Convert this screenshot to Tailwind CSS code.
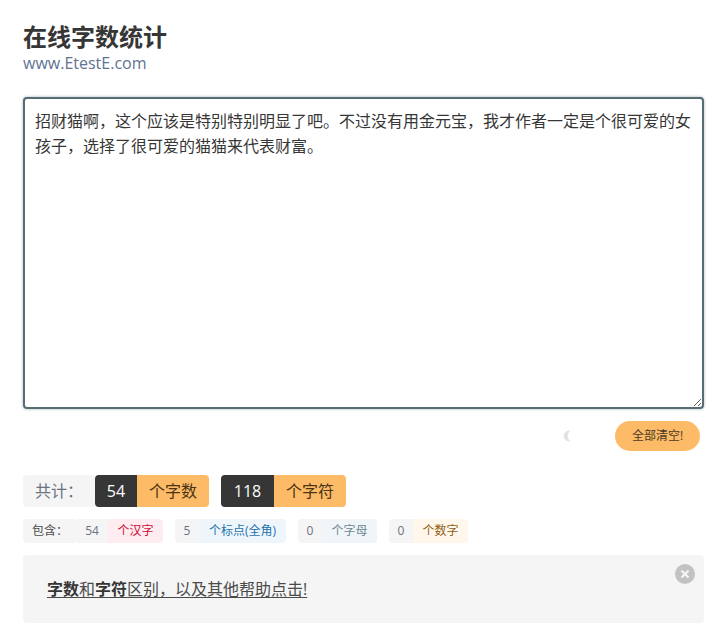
<!DOCTYPE html>
<html lang="zh-CN">
<head>
<meta charset="utf-8">
<title>在线字数统计</title>
<script src="https://cdn.jsdelivr.net/npm/@tailwindcss/browser@4"></script>
</head>
<body class="bg-white text-[#4a4a4a] font-['Open_Sans','Noto_Sans_CJK_SC',sans-serif] overflow-hidden">
<div class="w-[721px] h-[631px] pl-[23px] pr-[17px] pt-[21px]">
    <!-- Title -->
    <h1 class="text-2xl leading-[32px] font-bold text-[#363636]">在线字数统计</h1>
    <p class="text-base leading-[20px] text-[#5f7391]">www.EtestE.com</p>

    <!-- Text input -->
    <textarea class="block mt-[24px] w-full h-[312px] pl-[10px] pr-[8px] pt-[10px] pb-[10px] text-base leading-[25px] text-[#363636] bg-white border-2 border-[#566d73] rounded-[4px] shadow-[0_0_3px_#9fb2b7] outline-none resize-y">招财猫啊，这个应该是特别特别明显了吧。不过没有用金元宝，我才作者一定是个很可爱的女孩子，选择了很可爱的猫猫来代表财富。</textarea>

    <!-- Clear row -->
    <div class="flex items-center justify-end mt-[12px] h-[30px] pr-[4px]">
        <svg class="w-[10px] h-[12px] mr-[43px]" viewBox="0 0 10 12">
            <path d="M8.5 .8A5.4 5.4 0 1 0 8.5 11.2 6.2 6.2 0 0 1 8.5 .8Z" fill="#e0e3e3"/>
        </svg>
        <button class="w-[85px] h-[30px] rounded-full bg-[#fdbb68] text-xs text-[#4a3a22]">全部清空!</button>
    </div>

    <!-- Totals -->
    <div class="flex mt-[24px] h-[32px] text-base leading-[32px]">
        <span class="w-[72px] pl-[12px] bg-[#f5f5f5] rounded-l-[4px] text-[#6b7280]">共计：</span>
        <span class="w-[42px] text-center bg-[#363636] text-white rounded-l-[4px]">54</span>
        <span class="w-[72px] text-center bg-[#fdbb68] text-[#4a3413] rounded-r-[4px]">个字数</span>
        <span class="w-[53px] ml-[12px] text-center bg-[#363636] text-white rounded-l-[4px]">118</span>
        <span class="w-[72px] text-center bg-[#fdbb68] text-[#4a3413] rounded-r-[4px]">个字符</span>
    </div>

    <!-- Breakdown -->
    <div class="flex mt-[12px] h-[24px] text-xs leading-[24px]">
        <span class="w-[52px] pl-[9px] bg-[#f5f5f5] rounded-l-[4px] text-[#4a4a4a]">包含：</span>
        <span class="w-[33px] pl-[1px] text-center bg-[#f5f5f5] text-[#6b7280] rounded-l-[4px]">54</span>
        <span class="w-[55px] text-center bg-[#feecf0] text-[#cc0f35] rounded-r-[4px]">个汉字</span>
        <span class="w-[24px] ml-[12px] text-center bg-[#f5f5f5] text-[#6b7280] rounded-l-[4px]">5</span>
        <span class="w-[87px] text-center bg-[#eef6fc] text-[#1d72aa] rounded-r-[4px]">个标点(全角)</span>
        <span class="w-[24px] ml-[12px] text-center bg-[#f5f5f5] text-[#6b7280] rounded-l-[4px]">0</span>
        <span class="w-[55px] text-center bg-[#eff5f8] text-[#6f8791] rounded-r-[4px]">个字母</span>
        <span class="w-[24px] ml-[12px] text-center bg-[#f5f5f5] text-[#6b7280] rounded-l-[4px]">0</span>
        <span class="w-[55px] text-center bg-[#fff7ec] text-[#8f5f14] rounded-r-[4px]">个数字</span>
    </div>

    <!-- Help notification -->
    <div class="relative mt-[12px] h-[68px] pl-[24px] bg-[#f5f5f5] rounded-[4px] text-base leading-[68px] text-[#4a4a4a]">
        <a href="#" class="underline underline-offset-2"><b class="text-[#363636]">字数</b>和<b class="text-[#363636]">字符</b>区别，以及其他帮助点击!</a>
        <button class="absolute top-[9px] right-[9px] w-[20px] h-[20px] rounded-full bg-[#c2c2c2] flex items-center justify-center">
            <svg class="w-[10px] h-[10px]" viewBox="0 0 10 10">
                <path d="M1.5 1.5L8.5 8.5M8.5 1.5L1.5 8.5" stroke="#f5f5f5" stroke-width="2.2"/>
            </svg>
        </button>
    </div>
</div>
</body>
</html>
